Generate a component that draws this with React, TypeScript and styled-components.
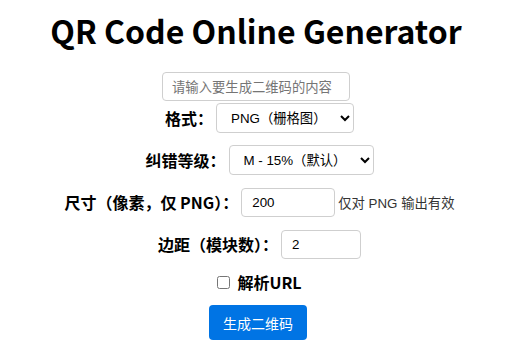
import React from "react";
import styled, { createGlobalStyle } from "styled-components";

const GlobalStyle = createGlobalStyle`
  html, body { margin: 0; padding: 0; background: #fff; }
  body { font-family: "Noto Sans CJK SC", sans-serif; color: #000; }
`;

const Page = styled.div`
  width: 512px;
  padding-top: 7px;
  display: flex;
  flex-direction: column;
  align-items: center;
  text-align: center;
`;

const Title = styled.h1`
  margin: 0 0 19px;
  font-family: "Noto Sans CJK SC", sans-serif;
  font-weight: 700;
  font-size: 32px;
  line-height: 46px;
`;

const TextInput = styled.input`
  box-sizing: border-box;
  width: 188px;
  height: 29px;
  margin: 0 0 2px;
  padding: 0 9px;
  border: 1px solid #cfcfcf;
  border-radius: 4px;
  font-family: "Noto Sans CJK SC", "Liberation Sans", sans-serif;
  font-size: 13.33px;
  outline: none;
  &::placeholder { color: #757575; }
`;

const Row = styled.div`
  display: flex;
  align-items: center;
  justify-content: center;
  gap: 3px;
  height: 30px;
  padding-left: 7px;
  margin-bottom: 12px;
`;

const Label = styled.label`
  font-family: "Noto Sans CJK SC", sans-serif;
  font-weight: 700;
  font-size: 16px;
  white-space: nowrap;
`;

const Select = styled.select<{ $w: number }>`
  box-sizing: border-box;
  width: ${(p) => p.$w}px;
  height: 30px;
  padding: 0 10px;
  border: 1px solid #cfcfcf;
  border-radius: 4px;
  background: #fff;
  color: #000;
  font-family: "Liberation Sans", "Noto Sans CJK SC", sans-serif;
  font-size: 13.33px;
`;

const NumberInput = styled.input<{ $w: number }>`
  box-sizing: border-box;
  width: ${(p) => p.$w}px;
  height: 29px;
  padding: 0 10px;
  border: 1px solid #cfcfcf;
  border-radius: 4px;
  font-family: "Liberation Sans", sans-serif;
  font-size: 13.33px;
  color: #000;
  outline: none;
`;

const Hint = styled.span`
  font-family: "Liberation Sans", "Noto Sans CJK SC", sans-serif;
  font-size: 13.33px;
  color: #333;
  white-space: nowrap;
`;

const CheckRow = styled.label`
  display: flex;
  align-items: center;
  justify-content: center;
  gap: 7px;
  height: 24px;
  padding-left: 7px;
  margin-top: -1px;
  margin-bottom: 11px;
  font-family: "Noto Sans CJK SC", sans-serif;
  font-weight: 700;
  font-size: 16px;
`;

const Checkbox = styled.input`
  width: 13px;
  height: 13px;
  margin: 0;
`;

const Button = styled.button`
  width: 98px;
  height: 35px;
  margin-left: 4px;
  border: none;
  border-radius: 4px;
  background: #0074e4;
  color: #fff;
  font-family: "Noto Sans CJK SC", sans-serif;
  font-size: 14px;
  cursor: pointer;
`;

export default function App() {
  return (
    <>
      <GlobalStyle />
      <Page>
        <Title>QR Code Online Generator</Title>
        <TextInput type="text" placeholder="请输入要生成二维码的内容" />
        <Row>
          <Label>格式：</Label>
          <Select $w={138} defaultValue="png">
            <option value="png">PNG（栅格图）</option>
            <option value="svg">SVG（矢量图）</option>
          </Select>
        </Row>
        <Row>
          <Label>纠错等级：</Label>
          <Select $w={145} defaultValue="M">
            <option value="L">L - 7%</option>
            <option value="M">M - 15%（默认）</option>
            <option value="Q">Q - 25%</option>
            <option value="H">H - 30%</option>
          </Select>
        </Row>
        <Row>
          <Label>尺寸（像素，仅 PNG）：</Label>
          <NumberInput $w={94} type="number" defaultValue={200} />
          <Hint>仅对 PNG 输出有效</Hint>
        </Row>
        <Row>
          <Label>边距（模块数）：</Label>
          <NumberInput $w={80} type="number" defaultValue={2} />
        </Row>
        <CheckRow>
          <Checkbox type="checkbox" />
          解析URL
        </CheckRow>
        <Button type="button">生成二维码</Button>
      </Page>
    </>
  );
}
